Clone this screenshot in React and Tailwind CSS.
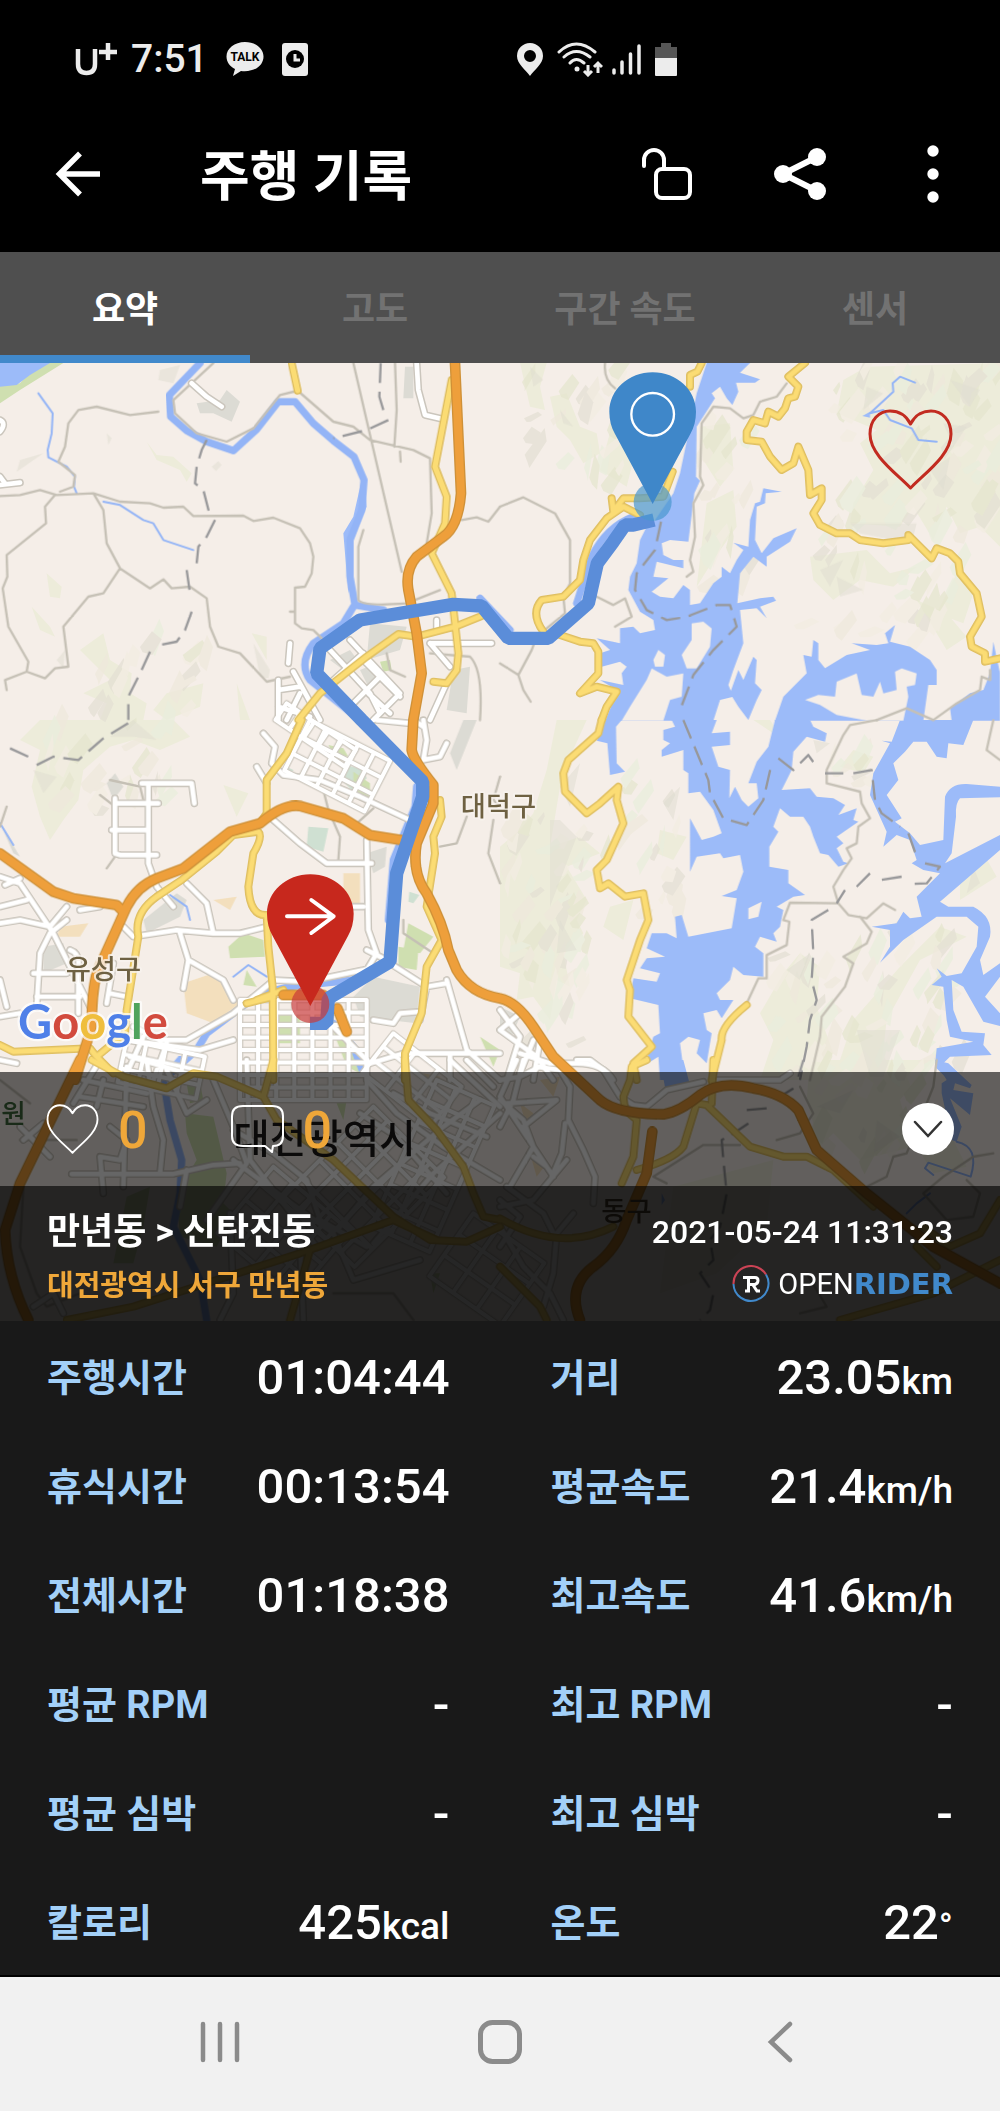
import React from "react";

const KR = "font-['Roboto','Noto_Sans_CJK_KR',sans-serif]";

/* The map is drawn in six tiles; every layer lists [tile, path] pairs. */
const TILES = {
  A: "translate(0 0)",
  B: "translate(1500 0)",
  C: "translate(0 1080)",
  D: "translate(1500 1080)",
  E: "translate(0 2100)",
  F: "translate(1500 2100)",
};

const HILLS = [
  ["A", "M440 245L470 300 540 330 560 365 575 340 520 290 470 285ZM140 640L185 680 180 715 150 710ZM95 740L150 800 165 830 120 810ZM240 870L310 820 330 900 395 940 390 1000 440 1030 430 1080H300L320 1030 250 1000 330 960ZM500 1000L610 970 600 1040 500 1080 460 1050ZM755 820L800 830 800 900ZM710 970L750 1080H720Z"],
  ["B", "M60 9H140L120 80 135 150 90 140ZM150 110L200 100 240 200 290 220 300 280 250 310 210 240 170 200ZM340 180L400 300 380 380 300 330ZM1030 60L1100 20 1500 9V560L1440 500 1380 520 1340 440 1300 540 1240 440 1200 500 1050 490 1060 430 1120 330 1080 250 1130 210 1010 160ZM930 590L1100 570 1170 640 1250 620 1180 680 1080 660 1000 720 940 660ZM600 200L690 190 700 330 660 380 610 300ZM620 430L700 390 710 500 640 600 590 680ZM1370 640L1420 700 1390 790 1310 760ZM1250 720L1340 760 1400 830 1340 870Z"],
  ["C", "M120 0H520L570 50 480 90 400 60 330 80 250 150 235 240 190 300 150 360 120 290 95 200 120 90 60 60ZM670 195L745 220 710 290Z"],
  ["D", "M170 0H260L210 110 180 200 150 380 240 350 300 400 200 440 260 540 230 600 250 640 190 700 210 800 170 780 150 900 100 830 50 840 60 760 0 740V380L60 330 100 280 140 150ZM330 560L400 540 370 660 310 620ZM480 330L560 350 520 420 470 400ZM850 760L900 700 960 740 950 860 1000 1000 940 1080H780L820 960 780 880ZM1000 1080L1060 900 1200 740 1320 620 1400 650 1260 720 1160 900 1140 1080ZM1380 430L1450 400 1490 470 1380 540ZM1060 90L1120 110 1090 160 1020 140ZM850 60L760 0H810Z"],
  ["F", "M930 0H1300L1200 120 1240 260 1080 300 1000 220 960 260 920 120ZM520 380L820 300 800 500 650 640 480 700ZM1250 260L1360 240 1400 320 1300 340Z"],
];

const FOLDS = [
  ["A", "M60 300L130 280 50 335ZM320 220L335 235 325 255ZM635 320L655 303 665 315 648 333ZM780 950L760 850 810 930 805 955ZM170 900L195 870 190 925ZM480 30L540 15 520 70 475 60Z"],
  ["B", "M1050 490H1250L1240 530 1180 540 1080 520ZM1100 80L1150 100 1090 150ZM1350 60L1440 90 1410 140ZM1330 190L1400 200 1360 260ZM1010 650L1090 690 1020 710ZM960 630L1030 600 990 680ZM1290 330L1350 290 1330 390ZM90 20L130 60 100 80ZM180 150L220 200 190 190Z"],
  ["C", "M330 50L400 0 470 60 400 50ZM100 150L170 170 130 220Z"],
  ["D", "M150 300H180L230 350 150 560ZM180 200L240 130 210 260ZM180 600L230 690 170 700ZM940 60L990 70 950 100ZM1070 930L1200 930 1150 1070H1110ZM860 750L930 700 900 780ZM1420 440L1440 490 1400 520ZM490 250L540 200 520 300Z"],
  ["F", "M950 140L1060 90 1020 160ZM1130 180L1200 230 1120 280Z"],
];

/* Terrain relief: x, y, width, height, number of facets */
const RELIEF_AREAS = [
  [2480, 20, 500, 520, 70],
  [2380, 520, 480, 330, 30],
  [1500, 1380, 240, 700, 60],
  [120, 1080, 380, 280, 24],
  [240, 850, 360, 230, 16],
  [1560, 20, 300, 360, 22],
  [2080, 180, 140, 540, 20],
  [1800, 1250, 220, 480, 18],
  [2280, 1780, 200, 380, 24],
  [2480, 1700, 380, 440, 34],
  [2400, 2120, 350, 300, 24],
  [2460, 1080, 160, 200, 10],
];

const RELIEF_COLORS = ["#e6e6cf", "#f3ede2", "#e4e0d4", "#eaeedd", "#efe9dc"];

function reliefFacets() {
  let seed = 7;
  const rnd = () => {
    seed = (seed * 16807) % 2147483647;
    return seed / 2147483647;
  };
  const facets = [];
  for (const [x, y, w, h, count] of RELIEF_AREAS) {
    for (let i = 0; i < count; i++) {
      const px = Math.round(x + rnd() * w);
      const py = Math.round(y + rnd() * h);
      const a = Math.round(15 + rnd() * 45);
      const b = Math.round(20 + rnd() * 60);
      const c = Math.round(rnd() * 30);
      facets.push([`M${px} ${py}l${a} ${-b}l${c} ${Math.round(b / 2)}l${-a + 8} ${b}l${-c} ${8 - Math.round(b / 3)}z`, RELIEF_COLORS[Math.floor(rnd() * 5)]]);
    }
  }
  return facets;
}

const FACETS = reliefFacets();

const PARKS = [
  ["A", "M0 75L60 70 110 9H190L60 90 0 130ZM1140 905L1170 900 1175 930 1150 935Z"],
  ["C", "M1060 155L1110 190 1110 235 1060 215ZM985 75L1030 85 1045 110 1000 105ZM730 640L790 660 795 710 690 715 685 680ZM1225 610L1300 650 1260 700 1210 690ZM1195 680L1255 690 1250 750 1195 740ZM830 870H900V970H830ZM1440 950L1500 990 1480 1040ZM740 750L770 800 730 795ZM1000 935L1060 990 1080 1060 1040 1040Z"],
  ["E", "M560 70L600 70 610 120 570 130ZM555 160L640 170 680 340 670 430 700 460 650 560 540 530 530 400 590 300 560 220ZM380 410L450 380 430 500 400 610 340 610ZM1010 130L1040 120 1030 180ZM1290 640L1320 640 1300 700Z"],
];

const BLOCKS = [
  ["A", "M1215 20H1240V115H1210ZM590 130L660 120 680 90 720 125 695 185 640 160 600 160ZM1110 790L1220 800 1200 870 1100 900ZM1080 930L1130 910 1160 950 1110 990ZM990 900L1050 870 1080 910 1030 930ZM1360 930L1410 920 1400 1060 1340 1050Z"],
  ["C", "M1120 770L1260 800 1250 910 1080 890 1060 830ZM430 600L530 520 560 540 540 590 440 640ZM1390 0H1430L1370 150 1350 100ZM345 160L370 200 340 240 320 190ZM130 680L190 670 200 730 130 760ZM0 310L60 410 40 400ZM1100 400L1160 380 1155 440 1120 460Z"],
  ["D", "M0 860L60 890 30 960 0 930Z"],
];

const SCHOOLS = [
  ["C", "M925 320L985 325 970 395 920 380ZM1040 135L1090 150 1100 175 1060 215 1030 185ZM1228 515L1258 525 1240 550 1225 545ZM860 140L880 150 870 170 850 160Z"],
];

const SANDS = [
  ["C", "M180 620L265 610 240 650 170 650ZM550 790L640 760 720 850 640 910 560 880ZM640 540L710 530 690 570ZM1030 460H1080V560H1030Z"],
  ["E", "M600 300L650 290 640 340ZM1270 40L1320 50 1300 90ZM720 640L760 600 780 640Z"],
  ["F", "M120 60L180 50 160 110ZM60 130L100 160 80 200ZM90 280L140 310 110 350Z"],
];

const WATER = [
  ["A", "M0 9H150L90 45 50 75 0 80ZM1085 360L1095 370 1100 440 1050 560 1055 640 1045 700 1030 520 1060 470Z"],
  ["B", "M620 9H750L720 38 780 58 765 68 708 68 715 95 697 135 680 115 660 80 635 100 645 115 590 200 588 350 600 362 583 400 565 545 510 540 485 550 490 585 520 600 550 600V625L470 605 460 650 505 655 455 695 480 710 520 715 550 675 570 690V735L600 730 640 670 665 650V620L690 640 710 600 730 570 700 548 745 560 750 480 765 430 780 425 790 385 845 395 797 400 795 430 770 440 765 540 785 580 820 535 890 505 870 545 800 590V620L760 590 720 640 712 730 780 715 820 710 828 722 780 740 800 775 770 745 720 750 730 850 700 930 685 975 700 1010 660 1020 640 1082H315L345 1010 350 990 300 960 370 975 365 940 380 920 360 905 305 920 300 880 330 870 290 835 360 850V805L400 800 420 820 465 810 460 780 420 755 385 690 390 650 410 610 420 540 440 500 465 480 520 400 540 340 590 100ZM760 890L770 900 765 970 785 990 770 1020 745 1080 715 1040 690 1000 715 930 730 960ZM825 1082L850 1010 920 940 910 885 935 890 940 840 955 850V900L975 925 1040 885 1110 870 1055 850 1130 855 1165 850 1155 820 1185 795 1170 845 1230 860 1290 900 1310 930V975L1285 975 1270 1082ZM1500 1082H1355L1350 1045 1410 1000 1450 990 1470 940 1480 845 1500 940ZM1087 168L1110 155V173Z"],
  ["D", "M315 0H365L348 20 350 130 375 155 330 165 322 70 290 62ZM515 0H650L635 40 690 35V75L635 80 655 140 690 150 688 235 705 200 725 240 745 260 775 235 770 190 745 190 770 125 805 80 825 0H930L940 20 980 40 975 65 920 50 880 95 875 150 845 210 930 205 950 230 1000 235 1035 255 1015 285 1070 265 1060 300 1075 305 1010 350 1030 370 1010 385 1030 425 1045 430 1015 440 985 405 960 400 940 350 930 320 910 290 870 290 840 265 820 320 835 335 808 380V440L865 450V490L915 525 880 530 830 560 850 570 840 620 820 640 830 665 780 650 765 680 790 700V770L730 765 700 740 690 780 650 820 660 840 700 840 665 895 650 870 610 880 620 930 635 940 620 1030 590 1000 600 960 565 950 540 970 555 1080H480L475 1010 435 1035 460 950 480 940 475 855 390 835 400 775 470 785 480 760 420 745 440 715 495 710 440 685 455 640 500 640 530 655 525 590 545 585 565 650 695 625 710 535 665 528 710 510 730 455 720 405 670 415 660 400 590 410 570 455V295L605 360 640 350 665 340 640 270 600 215 565 220V160L550 150V90L485 110V90L510 70 490 60V30L525 20Z"],
  ["D", "M1200 0H1420L1390 75 1345 70 1340 115 1310 110 1280 65 1240 65 1215 95 1180 130 1195 180 1160 225 1205 295 1185 305 1230 340 1260 375 1330 360 1335 230Q1350 190 1400 192L1500 200V232L1380 235Q1365 250 1368 290L1355 400 1335 430 1500 345V390L1320 545 1345 560 1420 560Q1480 590 1470 650L1440 720 1450 765 1500 730V770L1455 830 1500 880V918L1450 905 1390 800 1355 780 1360 870 1385 935 1455 940 1450 975 1475 1005 1350 1010 1330 1030 1385 1080H1345L1305 1040 1310 985 1420 965 1350 950 1340 900 1330 800 1295 795 1325 770 1310 745 1340 768 1385 760 1430 680 1435 620 1400 590H1310L1210 660 1140 728 1170 680V630L1115 620 1190 610 1210 575 1230 595 1265 590 1250 530 1320 460 1270 450 1235 430 1250 420 1230 360 1190 345 1150 380 1160 335 1110 225 1120 160 1170 70 1145 62 1175 65Z"],
  ["F", "M480 0H550L570 75 495 82ZM1305 0L1345 10 1415 75 1410 85 1365 70 1360 90 1420 100 1410 165 1350 115 1385 200 1370 245 1355 240 1325 100 1325 70 1340 60ZM485 400L495 420 485 435Z"],
];

const ISLANDS = [
  ["B", "M545 885L575 840V790L610 785 635 805 630 860 590 925 560 925ZM460 900L475 870 495 885 490 920 465 920ZM365 1082L390 1040 440 960 455 925 500 950 550 940 545 1010 510 1020 490 1082ZM915 1020L955 1005 1005 1010 1010 965 1070 940 1085 1005 1120 1010 1140 965 1150 1000 1190 990 1185 935 1205 925 1250 940 1245 975 1220 980 1225 1010 1210 1082H1100L1010 1065 960 1035Z"],
  ["D", "M745 565L785 545 775 590 745 598Z"],
];

const RIVERS = [
  ["A", "M600 9L508 105 512 170 560 212 620 245 700 272 770 208 835 125 885 125 940 190 1000 242 1062 290 1092 360 1085 450 1050 540V650L1065 735 1150 750M1060 740L1030 790 940 850Q895 910 930 960L1080 1080"],
  ["B", "M400 470Q320 500 275 590L230 730M-60 715L30 810"],
  ["C", "M1250 200L1245 260 1180 420 1165 600M1060 780L870 800 810 815 740 850 620 940 590 990 500 1070M1000 910L1060 980 1090 1060"],
  ["E", "M540 0L490 60 510 180 545 300 540 400 520 500 600 660 620 780"],
];

const STREAMS = [
  ["A", "M115 100L158 160 155 220 143 270 145 292 200 320 225 350 222 380 230 400M310 425L360 435 430 480 460 490 490 540 580 570"],
  ["B", "M1245 68L1200 50 1178 70 1180 95 1110 160 1150 150 1170 180 1235 205 1255 240 1310 245"],
  ["C", "M0 310L40 375M510 525L560 560 570 600M700 770L745 735 800 770"],
  ["F", "M1370 245Q1440 260 1412 350L1285 308 1275 325 1300 345M1290 400L1250 430 1220 460"],
];

const TRAILS = [
  ["A", "M640 9L520 120 525 160 590 220 680 245 760 205 840 105 893 92M893 92L1000 185 1060 200 1110 240 1240 270 1290 295 1295 460 1280 550M1060 9L1205 635M0 408L60 405 120 390 170 405 280 400 360 425 450 430 490 443 550 440 580 468 730 467 760 483 820 473 900 505 930 550 940 590 935 640 915 680 885 683V790L905 805 940 810 965 835M475 155L390 165 290 140 235 150 205 190 195 260 175 305M280 400L310 450 320 550 360 625 450 685 490 658 515 685 570 680 620 715 630 800 655 860 720 880 800 965 870 950M165 405L135 440 138 490 20 585 22 650 8 685 25 800 85 905 80 935 15 960 20 990M360 625L310 700 265 710 190 800 205 920 165 925 135 955 80 935M175 305L225 345 220 380 180 395M1090 510L1075 560V720Q1090 740 1220 730L1320 690M1185 9L1190 150 1183 260M1200 275L1202 305M1385 480L1430 472 1465 485 1500 440M1160 880L1170 930 1215 950M1290 880L1410 890Q1450 930 1440 1080M885 755H870"],
  ["B", "M315 9Q310 60 345 85M860 70L830 110 780 125 760 165 730 175 690 145 640 140 605 190 600 350 610 375 580 430 585 530 570 600 580 635 560 650M0 440L70 412 165 460 210 540V670L190 710 195 760 110 830 95 870 55 945 0 910M55 945L70 990 92 1025M290 710L340 735 375 715 395 770 345 800M1130 1080L1220 1045 1300 1080 1370 1030 1440 990 1445 950 1470 960V930"],
  ["D", "M1130 0L1050 15 1030 45 980 150V190L1080 215 1085 250 1110 295 1075 320 1070 370 1040 385 1055 415 1030 450 1000 500 1015 550 870 548 850 600 868 605 860 675 800 705V775H775L740 850M1015 550L1045 585 1100 595 1150 550 1185 570M1080 590L1115 635 1100 670 1030 710 1060 730 1035 800 965 890 960 950 930 1080M1480 0L1460 90 1500 120"],
  ["C", "M970 210L985 270 1020 350 1015 420M1120 265L1060 320M20 260L0 320M1500 170L1480 240 1500 260M1400 290L1370 370 1320 380M1480 300L1465 400 1500 490M1210 600V640L1300 700M300 225L345 260M345 410L320 445M330 180L420 200 430 240"],
  ["E", "M0 60L90 130M60 240H230M70 380L60 560 110 700 140 740 240 700M1000 700L1180 700 1240 780"],
  ["F", "M500 370L460 350 610 255H720M1310 0L1300 80 1220 280 1180 290 1160 350 1100 380M900 80L940 160 900 220 830 240M1480 280L1420 290 1330 350 1270 400 1340 480 1420 470 1440 400 1400 360M920 640L980 740 900 760"],
];

const BORDERS = [
  ["A", "M1142 9L1140 60 1138 110 1150 150M1165 180L1100 210 1000 235M620 240L605 270 590 320 585 370 610 390 628 460M645 480L620 530 595 560 590 610M560 630L570 700M575 755L555 810 530 845 480 855M450 875L420 940 385 1010 385 1080"],
  ["B", "M483 485L465 570 410 640 405 690 440 750 500 780 560 770 650 735 690 735 710 800 640 870 580 945 540 1050"],
  ["C", "M30 85L85 110M110 135L160 110 235 120 310 55 400 0"],
  ["D", "M550 0L625 180 630 220 670 295 740 315 790 240 815 130M835 115L880 150 925 105 950 140M975 160H1030M1060 160L1115 150 1125 240 1145 280 1200 320M1225 340L1250 410M1275 430L1320 440 1280 490 1225 492M1205 470L1140 480M1110 460L1070 500M1035 510L1010 550M985 570L935 600 940 700 935 780 950 840 930 900 920 980 900 1080"],
  ["F", "M910 0L895 50M880 85L840 110M800 145L740 150M745 190L700 220 665 240 670 300 680 400 660 500 630 540 640 600 600 640 640 700 630 750 600 780"],
];

const STREETS = [
  ["A", "M1250 9L1255 90 1275 165 1330 178M575 70L620 110 665 140M0 180Q20 190 0 215M0 375L60 368M0 350L15 370M870 850L865 910M880 935L960 1080M835 960V1080M835 990L900 980M835 1040L930 1070M900 1000L860 1080M990 870L1110 1000 1140 1060M1050 840L1200 1000 1120 1080M1000 960L1090 880M1050 1040L1140 950M1105 1000L1170 1060M1090 900L1200 1010M1290 850H1475M1290 850L1350 920M1310 780V810M1340 970L1290 1080"],
  ["C", "M425 190H575L583 250M345 235V400L360 405H470M345 250H475M335 330H445M445 190V430L470 500 520 560M820 300L900 370 980 430H1115M1100 360L1105 630 1130 700 1100 750M790 40L825 80 815 130 850 165M770 140L800 190M0 470L60 490 160 640 270 860M15 495L60 475M0 560L80 540M0 610L60 600 150 620 200 560M200 600L150 640 120 700 110 860M100 760H200M110 830H240M210 690Q240 700 235 740V880M370 620L400 650 530 630 640 640 720 640 800 620M540 640L565 720 550 805M565 720L670 780 700 840M560 490L620 550 640 640M240 570L300 560M0 780L20 860M0 890L60 880M0 1020L50 1030M820 780L920 785 1090 750 1170 730 1280 800 1340 790M810 790L700 880 560 960 480 960 400 920M1100 690L1160 720M1090 560H1030M1340 780L1400 990 1500 1080M1210 1000H1500M1120 900L1180 910 1200 880 1260 875M1350 1000V1080M1280 800L1260 900M1270 0L1280 60 1270 120 1320 110 1340 70M1240 0L1270 20M1130 0L1230 10M850 165L960 180 1080 230 1230 300M1000 920L1110 1030 1210 1000M330 820L380 830M340 730L320 850M380 960L600 990 700 960M390 1010L560 1060M430 950L380 1060M500 970L460 1080"],
  ["D", "M0 930L110 1010 160 1080M0 870L60 950 20 1080M60 880L0 930M100 960L60 1060M60 1000L150 1030 230 1030Q310 1030 340 1080M120 960L100 1080"],
  ["E", "M215 342H520L640 315 720 310M300 0L220 130M250 60L440 100M240 110L430 140M310 60L290 140M380 20L370 380M440 0L460 140 490 240 480 340M330 200L380 240 360 300 300 290 310 400M500 30L560 160 620 120M740 0L750 300 950 560M640 60L700 200 740 310 620 480M60 200L150 290M70 240L130 190M560 330L540 440M700 210L820 280 920 360 960 480 1100 560M1100 0V60L1190 160 1330 260 1500 360M1180 100L1290 160 1460 230M1080 160L1190 230 1270 320 1340 400M1350 0L1500 140M1400 0L1480 80M1440 120L1330 200 1120 380 1020 500M1500 160L1300 340 1120 550M900 540L910 780M100 740L160 700 190 760M690 460L700 700 660 780M1000 520L1060 660 1260 600M700 300L860 420 1000 520"],
  ["F", "M0 120L70 180 100 260 30 380M50 0L0 110 80 230 160 350M70 0L40 120 0 200M110 20L180 30 210 80 205 180 250 270 285 350 280 430M0 60L60 50 120 20M20 130L170 120 70 200M195 190L185 280 155 350M100 290L140 320M230 0H270L310 30 360 110 400 135 440 140 500 90 610 65M640 60L840 60 870 40M20 380L130 460 160 520M0 500L70 620 150 700 190 780M0 420L60 470 0 560M220 460L170 520 160 640 130 740M200 300L100 420 0 440"],
];

const YELLOW = [
  ["A", "M1355 60L1305 320 1340 410 1335 490 1295 580 1355 700 1375 880 1370 930 1340 970 1300 965M875 9L893 92M1445 768L1365 800 1250 830 1195 822 1100 890 960 1000 895 1080"],
  ["B", "M605 9L592 35 570 45V80M915 9L865 50 895 80 885 110 865 115 855 145 835 170 805 155 795 190 760 180 740 215V240L785 245 810 290 845 330 880 310 895 260 925 330 930 405 965 385V420L940 460 960 495 1010 520H1050L1080 540 1150 550 1225 540 1225 525 1295 595 1310 565 1350 580 1375 605 1380 640 1430 700 1445 770 1410 830 1415 860 1455 880V905L1500 895M518 335L490 410 420 415 370 415 340 455 335 415M420 465L370 440 320 475 270 540 250 600 240 660 190 710 125 720Q90 760 130 815M180 825L240 845 280 850 295 875V940L240 1000 290 980 350 995 320 1040 305 1080"],
  ["C", "M905 0L860 100 800 180V280L780 310M545 480L650 395 700 345 775 335Q790 350 760 400L745 500Q750 590 800 585L805 680 818 800 820 1080M545 480L470 530Q400 580 415 650L380 870 375 940 290 1010 340 1060M0 975L40 995 270 985 290 1010M1320 240L1325 290 1300 350 1305 400 1280 560 1325 660 1280 740 1265 880 1215 1000V1080M820 830L740 850M850 810L770 840"],
  ["D", "M305 0L295 40 205 120 190 160 195 215 260 280 300 250 355 200 350 240 370 310 320 420 290 450 300 505 325 490 375 530 430 520 445 600 420 660 380 780 390 810 385 890 455 980 400 1030 410 1080M740 855Q660 920 665 960L635 1080"],
  ["E", "M275 0L370 50 500 85 580 40 650 50 790 110 820 0M790 110L830 180 1000 300 1180 470 1290 540 1400 545 1500 500M1215 0L1225 120 1310 210 1390 320 1420 400 1450 470 1500 480M200 780L400 740 900 580 1180 480M930 570L870 780M1180 480L1310 540"],
  ["F", "M440 0L395 20 390 60 370 110 375 150 410 180 400 290 365 370M410 330Q520 300 550 260L590 130 620 135 750 260 850 290 920 290 1000 330 1120 440M640 0L635 130M0 475Q180 580 340 500M0 620L120 740 140 780M1500 420L1440 520 1350 560 1270 500M1500 600L1300 700 1020 780M1250 560L1310 620"],
];

const HIGHWAYS = [
  ["A", "M1365 9L1383 400Q1375 500 1330 530L1250 590Q1215 630 1225 690L1250 820 1265 940 1240 1080 1235 1170Q1240 1200 1300 1275L1300 1330 1250 1450Q1235 1540 1280 1600Q1330 1690 1345 1770L1370 1830Q1410 1900 1500 1915Q1550 1925 1600 2000L1660 2090 1800 2220Q1850 2262 1990 2263Q2040 2255 2100 2205Q2160 2160 2260 2185Q2350 2200 2395 2250L2450 2370 2600 2500 2800 2660 3000 2770"],
  ["C", "M0 400L160 515 220 535 350 555 370 575M225 1080L275 920Q275 820 290 760L380 560Q410 500 470 475L550 445 690 335 780 310Q850 250 900 258L1030 295 1110 345 1205 360M850 825H970M1012 865L1040 935"],
  ["E", "M240 0L60 370 15 510Q20 650 85 780"],
  ["F", "M457 215L440 340 380 480Q350 570 280 620Q200 680 240 780"],
];

/* Dense street blocks: x, y, width, height, columns, rows, rotation */
const GRIDS = [
  [860, 1030, 250, 60, 5, 1, 34],
  [930, 1080, 270, 170, 5, 3, 27],
  [720, 1920, 380, 300, 7, 8, 0],
  [380, 2040, 240, 130, 4, 3, 12],
  [1120, 2240, 300, 380, 5, 5, 45],
  [820, 2420, 300, 260, 4, 4, 40],
  [1310, 2160, 190, 480, 3, 7, 24],
  [1180, 2020, 260, 150, 3, 3, 38],
  [1420, 2560, 260, 230, 3, 3, 35],
];

const gridPath = ([x, y, w, h, cols, rows]) => {
  let d = "";
  for (let i = 0; i <= cols; i++) d += `M${x + (w * i) / cols} ${y}v${h}`;
  for (let j = 0; j <= rows; j++) d += `M${x} ${y + (h * j) / rows}h${w}`;
  return d;
};

const GridLines = ({ stroke, width }) =>
  GRIDS.map((g, i) => (
    <path key={i} d={gridPath(g)} stroke={stroke} strokeWidth={width} transform={`rotate(${g[6]} ${g[0]} ${g[1]})`} />
  ));

const Fill = ({ items, color, opacity }) => (
  <g fill={color} opacity={opacity} stroke="none">
    {items.map(([t, d], i) => <path key={i} d={d} transform={TILES[t]} />)}
  </g>
);

const Line = ({ items, color, width, dash }) => (
  <g stroke={color} strokeWidth={width} strokeDasharray={dash}>
    {items.map(([t, d], i) => <path key={i} d={d} transform={TILES[t]} />)}
  </g>
);

const Pin = ({ x, y, color, halo, children }) => (
  <g transform={`translate(${x} ${y})`}>
    <circle r="57" cy="-6" fill={halo} fillOpacity="0.7" />
    <path d="M0 0L-113 -210C-124 -229 -130 -252 -130 -277C-130 -342 -72 -395 0 -395S130 -342 130 -277C130 -252 124 -229 113 -210Z" fill={color} />
    <g fill="none" stroke="#fff" strokeLinecap="round" strokeLinejoin="round">{children}</g>
  </g>
);

const MAP_LABELS = [
  ["대덕구", 1382, 1368, 82, "#6e6142", 12],
  ["유성구", 197, 1858, 82, "#6e6142", 12],
  ["원", 4, 2290, 80, "#3f6a3c", 0],
  ["대전광역시", 700, 2380, 119, "#1d1b19", 0],
  ["동구", 1804, 2584, 82, "#5a4d36", 0],
];

function RideMap() {
  return (
    <svg viewBox="0 9 3000 2874" preserveAspectRatio="xMidYMid slice" className="absolute inset-0 size-full bg-[#f5eee8]" role="img" aria-label="주행 경로 지도">
      <Fill items={HILLS} color="#edecda" />
      <g opacity="0.75">
        {FACETS.map(([d, color], i) => <path key={i} d={d} fill={color} />)}
      </g>
      <Fill items={FOLDS} color="#dfddd0" opacity="0.5" />
      <Fill items={BLOCKS} color="#dcdbd4" />
      <Fill items={SCHOOLS} color="#cfe0d2" />
      <Fill items={SANDS} color="#f3dfbd" />
      <Fill items={PARKS} color="#cfdfb0" />
      <Fill items={WATER} color="#9cbbf9" />
      <Fill items={ISLANDS} color="#f5eee8" />
      <g fill="none" strokeLinecap="round" strokeLinejoin="round">
        <Line items={RIVERS} color="#93b4f6" width="22" />
        <Line items={STREAMS} color="#93b4f6" width="6" />
        <Line items={TRAILS} color="#c5c0b5" width="7" />
        <g strokeLinecap="butt">
          <Line items={BORDERS} color="#98989a" width="7" dash="60 26" />
        </g>
        <GridLines stroke="#cfcac1" width="19" />
        <Line items={STREETS} color="#cbc6bd" width="23" />
        <GridLines stroke="#fff" width="12" />
        <Line items={STREETS} color="#fff" width="14" />
        <Line items={YELLOW} color="#dfbf62" width="24" />
        <Line items={YELLOW} color="#fbdc74" width="15" />
        <Line items={HIGHWAYS} color="#cf9138" width="32" />
        <Line items={HIGHWAYS} color="#ee9f3b" width="24" />
        <path
          d="M1962 480L1900 495 1875 495 1840 545 1792 610 1765 730 1645 835H1525L1445 738 1360 733 1080 780 960 865 950 940 1085 1080 1268 1265V1310L1190 1540 1170 1805 985 1915 980 1990H930"
          stroke="#5b8dd9" strokeWidth="40" strokeLinecap="butt" strokeLinejoin="bevel"
        />
      </g>
      <g className="font-['Noto_Sans_CJK_KR',sans-serif] font-medium" stroke="#f8f3ee" strokeOpacity="0.8" strokeLinejoin="round" paintOrder="stroke">
        {MAP_LABELS.map(([name, x, y, size, color, halo]) => (
          <text key={name} x={x} y={y} fontSize={size} fill={color} strokeWidth={halo}>{name}</text>
        ))}
      </g>
      <text x="54" y="2038" fontSize="141" className="font-['Lato',sans-serif] font-bold" stroke="#fff" strokeOpacity="0.7" strokeWidth="14" strokeLinejoin="round" paintOrder="stroke">
        <tspan fill="#4f80e8">G</tspan><tspan fill="#d24b3e">o</tspan><tspan fill="#efbe3d">o</tspan><tspan fill="#4f80e8">g</tspan><tspan fill="#4fa35d">l</tspan><tspan fill="#d24b3e">e</tspan>
      </text>
      <Pin x={1958} y={432} color="#3f87c9" halo="#4a97cf">
        <circle cy="-269" r="64" strokeWidth="7" />
      </Pin>
      <Pin x={931} y={1938} color="#c7281d" halo="#c83a3a">
        <path d="M-70 -269H70M3 -318L70 -269 3 -219" strokeWidth="12" />
      </Pin>
    </svg>
  );
}

const Heart = ({ className, width }) => (
  <svg viewBox="0 0 85 81" fill="none" stroke="currentColor" strokeWidth={width} strokeLinejoin="round" className={className} aria-hidden="true">
    <path d="M42.500 79C28 64 2 46 2 25C2 11 11 2 22 2C32 2 39 8 42.500 15C46 8 53 2 63 2C74 2 83 11 83 25C83 46 57 64 42.500 79Z" />
  </svg>
);

function StatusBar() {
  return (
    <div className="flex h-[118px] items-center pl-[73px] text-[#ececec]">
      <div className="flex items-center">
        <svg viewBox="0 0 46 36" className="h-9 w-[46px]" fill="none" stroke="currentColor" aria-label="U+">
          <path d="M5 8V23Q5 32 13.500 32T22 23V8" strokeWidth="4.500" />
          <path d="M26 11H44M35 2V19" strokeWidth="4.500" />
        </svg>
        <time className="ml-3 text-[39px] leading-none font-medium">7:51</time>
        <svg viewBox="0 0 38 36" className="ml-[18px] h-9 w-[38px]" aria-label="TALK">
          <path d="M19 1C8.500 1 .500 7.500 .500 15.500C.500 21 4 25.500 9 28L7 35L15 30C31 31.500 37.500 23 37.500 15.500C37.500 7.500 29.500 1 19 1Z" fill="currentColor" />
          <text x="19" y="20" textAnchor="middle" fontSize="12" fill="#000" className="font-['Roboto',sans-serif] font-bold">TALK</text>
        </svg>
        <svg viewBox="0 0 28 34" className="ml-[17px] h-[34px] w-7" aria-hidden="true">
          <rect x="1" y="1" width="26" height="33" rx="3" fill="currentColor" />
          <circle cx="14" cy="17" r="9" fill="#000" />
          <path d="M14 12V18H19" fill="none" stroke="currentColor" strokeWidth="3" />
        </svg>
      </div>
      <div className="ml-[208px] flex items-center">
        <svg viewBox="0 0 26 34" className="h-[34px] w-[26px]" aria-hidden="true">
          <path fillRule="evenodd" fill="currentColor" d="M13 1A13 13 0 0 0 0 14C0 22 9 28 13 34C17 28 26 22 26 14A13 13 0 0 0 13 1ZM13 8A6 6 0 1 1 13 20A6 6 0 1 1 13 8Z" />
        </svg>
        <svg viewBox="0 0 46 36" className="ml-[14px] h-9 w-[46px]" fill="none" stroke="currentColor" strokeWidth="3" aria-hidden="true">
          <path d="M2 11Q19 -5 38 11M7 16Q19 5 33 16M13 22Q19 15 27 22" strokeLinecap="round" />
          <circle cx="20" cy="28" r="2.500" fill="currentColor" stroke="none" />
          <path d="M31 24V33M27 30L31 34L35 30M41 32V24M37 26L41 22L45 26" />
        </svg>
        <svg viewBox="0 0 29 32" className="ml-[9px] h-8 w-[29px]" fill="none" stroke="currentColor" strokeWidth="3.500" strokeLinecap="round" aria-hidden="true">
          <path d="M2 27V30M10 19V30M18.500 11V30M27 3V30" />
        </svg>
        <svg viewBox="0 0 22 34" className="ml-[14px] h-[34px] w-[22px]" aria-hidden="true">
          <path d="M6 1H16V5H22V17H0V5H6Z" fill="#565656" />
          <path d="M0 16H22V33Q22 34 21 34H1Q0 34 0 33Z" fill="currentColor" />
        </svg>
      </div>
    </div>
  );
}

function AppBar() {
  return (
    <div className="flex h-[134px] items-center pr-[61px] pb-[22px] pl-[55px] text-white">
      <button aria-label="뒤로">
        <svg viewBox="0 0 46 46" className="size-[46px]" fill="none" stroke="currentColor" strokeWidth="5.500" aria-hidden="true">
          <path d="M45 23H5M25 2.500L4.500 23L25 43.500" />
        </svg>
      </button>
      <h1 className="ml-[99px] flex-1 pt-2 text-[54px] leading-none font-bold">주행 기록</h1>
      <button aria-label="잠금 해제">
        <svg viewBox="0 0 50 52" className="h-[52px] w-[50px]" fill="none" stroke="currentColor" strokeWidth="4" strokeLinecap="round" aria-hidden="true">
          <rect x="14" y="21" width="34" height="29" rx="6" />
          <path d="M2 18V12A10 10 0 0 1 22 12V21" />
        </svg>
      </button>
      <button aria-label="공유" className="ml-[82px]">
        <svg viewBox="0 0 52 52" className="size-[52px]" fill="currentColor" aria-hidden="true">
          <circle cx="9" cy="26" r="9" /><circle cx="43" cy="9" r="9" /><circle cx="43" cy="43" r="9" />
          <path d="M43 9L9 26L43 43" fill="none" stroke="currentColor" strokeWidth="6" />
        </svg>
      </button>
      <button aria-label="더보기" className="ml-[101px]">
        <svg viewBox="0 0 12 58" className="h-[58px] w-3" fill="currentColor" aria-hidden="true">
          <circle cx="6" cy="6" r="5.700" /><circle cx="6" cy="29" r="5.700" /><circle cx="6" cy="52" r="5.700" />
        </svg>
      </button>
    </div>
  );
}

function Tabs() {
  return (
    <div role="tablist" className="grid h-[111px] grid-cols-4 bg-[#4f4f4f] text-4xl leading-none font-bold">
      {["요약", "고도", "구간 속도", "센서"].map((name, i) => (
        <button
          key={name}
          role="tab"
          aria-selected={i === 0}
          className={i === 0 ? "border-b-8 border-[#4189cb] pt-3 text-white" : "border-b-8 border-transparent pt-3 text-[#727272]"}
        >
          {name}
        </button>
      ))}
    </div>
  );
}

function MapPanel() {
  return (
    <section className="relative">
      <RideMap />
      <button aria-label="즐겨찾기" className="absolute top-[46px] right-[47px] text-[#c22b20]">
        <Heart className="h-[81px] w-[85px]" width="3" />
      </button>
      <div className="relative pt-[709px]">
        <div className="flex h-[114px] items-center bg-black/60 px-[46px] text-[52px] leading-none font-medium text-[#efa739]">
          <button className="flex items-center" aria-label="좋아요 0">
            <Heart className="h-[50px] w-[53px] text-white" width="3" />
            <span className="ml-[19px] pt-1">0</span>
          </button>
          <button className="ml-[83px] flex items-center" aria-label="댓글 0">
            <svg viewBox="0 0 53 50" className="h-[50px] w-[53px] text-white" fill="none" stroke="currentColor" strokeWidth="2" strokeLinejoin="round" aria-hidden="true">
              <path d="M12 2H41Q52 2 52 12V32Q52 42 42 42L41 48L34 42H12Q1 42 1 32V12Q1 2 12 2Z" />
            </svg>
            <span className="ml-[19px] pt-1">0</span>
          </button>
          <button aria-label="접기" className="ml-auto flex size-[52px] items-center justify-center rounded-full bg-white text-[#333]">
            <svg viewBox="0 0 30 18" className="h-[18px] w-[30px]" fill="none" stroke="currentColor" strokeWidth="2.500" strokeLinecap="round" aria-hidden="true">
              <path d="M2 2L15 16L28 2" />
            </svg>
          </button>
        </div>
        <div className="flex h-[135px] justify-between bg-black/85 px-[47px] pt-[26px]">
          <div className="font-bold">
            <h2 className="text-4xl leading-10 text-white">만년동 &gt; 신탄진동</h2>
            <p className="mt-[14px] text-[29px] leading-10 text-[#efa739]">대전광역시 서구 만년동</p>
          </div>
          <div className="flex flex-col items-end text-white">
            <time className="text-[32px] leading-10 font-medium">2021-05-24 11:31:23</time>
            <div className="mt-3 flex h-10 items-center text-[29px] leading-none">
              <svg viewBox="0 0 38 38" className="mr-2 size-[38px]" fill="none" aria-hidden="true">
                <path d="M1.500 19A17.500 17.500 0 0 1 34 9.500" stroke="#cb4355" strokeWidth="2" />
                <path d="M34 9.500A17.500 17.500 0 1 1 1.500 19" stroke="#4189cb" strokeWidth="2" />
                <path d="M11 12.500H23Q26 12.500 26 15.500T23 19.500H18M21 20L25 26H28M16.500 13V26H13" stroke="#fff" strokeWidth="3" />
              </svg>
              <span>OPEN</span>
              <span className="font-['DejaVu_Sans',sans-serif] font-bold text-[#4189cb]">RIDER</span>
            </div>
          </div>
        </div>
      </div>
    </section>
  );
}

const STATS = [
  ["주행시간", "01:04:44", ""],
  ["거리", "23.05", "km"],
  ["휴식시간", "00:13:54", ""],
  ["평균속도", "21.4", "km/h"],
  ["전체시간", "01:18:38", ""],
  ["최고속도", "41.6", "km/h"],
  ["평균 RPM", "-", ""],
  ["최고 RPM", "-", ""],
  ["평균 심박", "-", ""],
  ["최고 심박", "-", ""],
  ["칼로리", "425", "kcal"],
  ["온도", "22", "°"],
];

function Stats() {
  return (
    <dl className="grid grid-cols-2 gap-x-[101px] border-b-2 border-black bg-[#191919] px-[47px]">
      {STATS.map(([label, value, unit]) => (
        <div key={label} className="flex h-[109px] items-center justify-between pt-1">
          <dt className="text-[38px] leading-none font-bold text-[#a3d0f8]">{label}</dt>
          <dd className="text-[49px] leading-none font-medium text-white">
            {value}<span className="text-[37px]">{unit}</span>
          </dd>
        </div>
      ))}
    </dl>
  );
}

function NavBar() {
  return (
    <nav className="flex h-[134px] items-center justify-center gap-[200px] bg-[#f1f1f1] pb-1 text-[#8b8b8b]">
      <button aria-label="최근 앱" className="flex w-20 justify-center">
        <svg viewBox="0 0 40 42" className="h-[42px] w-10" fill="none" stroke="currentColor" strokeWidth="4.500" strokeLinecap="round" aria-hidden="true">
          <path d="M3 3V39M20 3V39M37 3V39" />
        </svg>
      </button>
      <button aria-label="홈" className="flex w-20 justify-center">
        <svg viewBox="0 0 46 46" className="size-[46px]" fill="none" stroke="currentColor" strokeWidth="5" aria-hidden="true">
          <rect x="3.500" y="3.500" width="39" height="39" rx="12" />
        </svg>
      </button>
      <button aria-label="뒤로 가기" className="flex w-20 justify-center">
        <svg viewBox="0 0 26 42" className="h-[42px] w-[26px]" fill="none" stroke="currentColor" strokeWidth="4.500" strokeLinecap="round" aria-hidden="true">
          <path d="M23 3L4 21L23 39" />
        </svg>
      </button>
    </nav>
  );
}

export default function App() {
  return (
    <div className={`${KR} w-full bg-black`}>
      <header>
        <StatusBar />
        <AppBar />
      </header>
      <main>
        <Tabs />
        <MapPanel />
        <Stats />
      </main>
      <NavBar />
    </div>
  );
}
